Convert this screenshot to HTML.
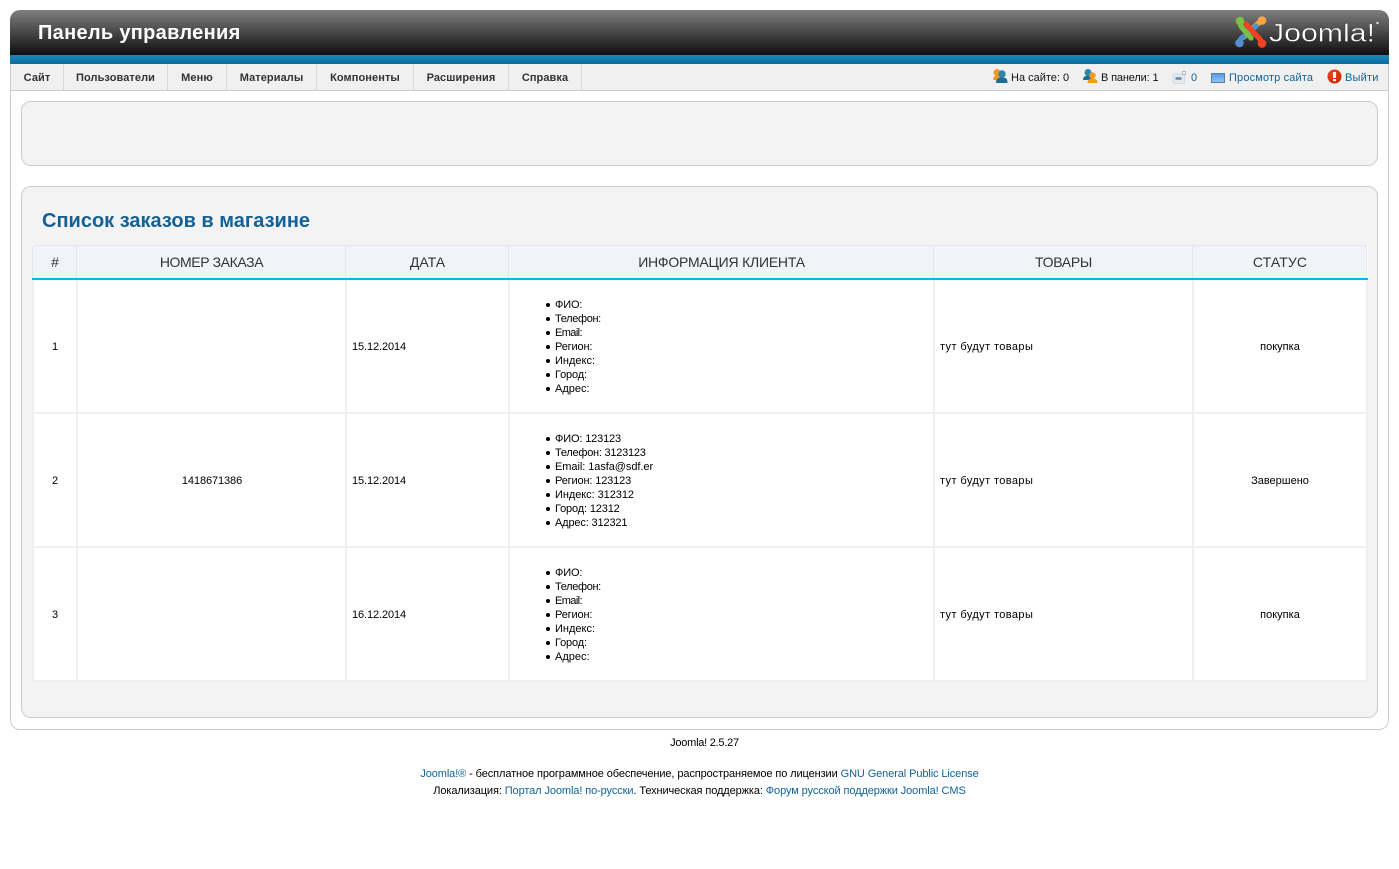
<!DOCTYPE html>
<html lang="ru"><head><meta charset="utf-8"><title>Панель управления</title>
<style>
html,body{margin:0;padding:0;background:#fff;}
body{width:1399px;height:869px;position:relative;overflow:hidden;font:11px/14px "Liberation Sans",Arial,sans-serif;color:#000;}
a{color:#146295;text-decoration:none}
.abs{position:absolute;white-space:nowrap}
#hdr{position:absolute;left:10px;top:10px;width:1379px;height:45px;border-radius:10px 10px 0 0;background:linear-gradient(#7f7f7f,#0e0e0e);}
#blue{position:absolute;left:10px;top:55px;width:1379px;height:9px;background:linear-gradient(#1c88b9,#0a6a9c);}
#title{left:38px;top:21px;font-size:20px;line-height:24px;font-weight:bold;color:#fff;letter-spacing:.3px;}
#wrap{position:absolute;left:10px;top:64px;width:1377px;height:665px;border:1px solid #ccc;border-top:0;border-radius:0 0 10px 10px;background:#fff;}
#menu{position:absolute;left:11px;top:64px;width:1377px;height:26px;background:#f0f0f0;border-bottom:1px solid #ccc;}
.m{position:absolute;top:0;height:26px;border-right:1px solid #d8d8d8;text-align:center;font-weight:bold;line-height:28px;color:#333;letter-spacing:.08px}
.panel{position:absolute;left:21px;width:1355px;background:#f3f3f3;border:1px solid #ccc;border-radius:10px;}
h2{position:absolute;left:42px;top:209px;margin:0;font-size:20px;line-height:24px;font-weight:bold;color:#146295;}
table{position:absolute;left:32px;top:245px;width:1334px;border-collapse:collapse;table-layout:fixed;background:#fff;}
th{height:32px;padding:0;background:#f0f4f9;border-top:1px solid #e4e6e9;border-left:0;border-right:0;border-bottom:2px solid #0ab5ea;font-size:14px;font-weight:normal;color:#333;position:relative}
th::before{content:"";position:absolute;left:-1px;top:0;bottom:0;width:1px;background:#e4e6e9}
th.z::after{content:"";position:absolute;right:0;top:0;bottom:0;width:1px;background:#e4e6e9}
td{height:130px;padding:2px 5px 0;border:2px solid #f0f0f0;font-size:11px;line-height:14px;}
.c{text-align:center}
.d{letter-spacing:-.1px}
.g{letter-spacing:.4px}
td ul{margin:0;padding:0 0 0 40px;list-style:none}
td li{height:14px;position:relative;white-space:nowrap}
td li::before{content:"";position:absolute;left:-9px;top:5px;width:4px;height:4px;border-radius:50%;background:#000}
.tl{letter-spacing:-.35px}.em{letter-spacing:-.6px}.sh{letter-spacing:-.15px}
.tl2{letter-spacing:-.25px}.em2{letter-spacing:-.06px}
.f{position:absolute;left:0;width:1399px;text-align:center;font-size:11px;line-height:14px;letter-spacing:-.1px}
</style></head><body>
<div id="hdr"></div><div id="blue"></div>
<div class="abs" id="title">Панель управления</div>
<svg class="abs" style="left:1234px;top:15px" width="150" height="34" viewBox="0 0 150 34">
<g fill="none" stroke-width="5.200" stroke-linecap="round" stroke-linejoin="round">
<path d="M28 5.500 C24 8 22 10 17 15 L10 22" stroke="#f9a541"/>
<path d="M5.500 28 C6 23 9 22 12 20 L22 11" stroke="#5091cd"/>
<path d="M12 9 L21 19 C24 22 27 24 28 29" stroke="#f44321"/>
<path d="M6 6 C6 11 8 13 11 16 L17 23" stroke="#7ac143"/>
</g>
<circle cx="6" cy="6" r="4.300" fill="#7ac143"/><circle cx="28" cy="5.500" r="4.300" fill="#f9a541"/><circle cx="5.500" cy="28" r="4.300" fill="#5091cd"/><circle cx="28" cy="28.500" r="4.300" fill="#f44321"/>
<text x="35" y="26.500" font-family="Liberation Sans,sans-serif" font-size="25" fill="#fff" stroke="#2a2a2a" stroke-width=".35" textLength="106" lengthAdjust="spacingAndGlyphs">Joomla!</text>
<circle cx="143.500" cy="8" r="1.200" fill="#ddd"/>
</svg>
<div id="wrap"></div>
<div id="menu">
<div class="m" style="left:0;width:52px">Сайт</div>
<div class="m" style="left:53px;width:103px">Пользователи</div>
<div class="m" style="left:157px;width:58px">Меню</div>
<div class="m" style="left:216px;width:89px">Материалы</div>
<div class="m" style="left:306px;width:96px">Компоненты</div>
<div class="m" style="left:403px;width:94px">Расширения</div>
<div class="m" style="left:498px;width:72px">Справка</div>
</div>
<svg class="abs" style="left:992px;top:68px" width="16" height="16" viewBox="0 0 16 16"><circle cx="5" cy="4.500" r="3.500" fill="#f39a1f"/><path d="M1 12c0-3 1.500-4.500 4-4.500s5 1.500 5 4.500z" fill="#f39a1f"/><circle cx="10" cy="6" r="3.700" fill="#2d86ad"/><path d="M4 15c0-4.500 2-5.500 6-5.500s5.500 1 5.500 5.500z" fill="#1c6d92"/></svg>
<div class="abs" style="left:1011px;top:71px;color:#111">На сайте: 0</div>
<svg class="abs" style="left:1082px;top:68px" width="16" height="16" viewBox="0 0 16 16"><circle cx="6" cy="4.500" r="3.500" fill="#2d86ad"/><path d="M1 12c0-3 2-4.500 5-4.500s5 1.500 5 4.500z" fill="#1c6d92"/><circle cx="10.500" cy="7.500" r="3.200" fill="#f39a1f"/><path d="M5.500 15c0-3.500 2-4.500 5-4.500s5 1 5 4.500z" fill="#f39a1f"/></svg>
<div class="abs" style="left:1101px;top:71px;color:#111;letter-spacing:-.15px">В панели: 1</div>
<svg class="abs" style="left:1172px;top:71px" width="15" height="13" viewBox="0 0 15 13"><rect x="1" y="3" width="11.500" height="9.500" rx="1.500" fill="#e6e9ec" stroke="#d5d8da"/><path d="M3.500 7.500h6" stroke="#5d8aa5" stroke-width="2.500"/><rect x="10.500" y=".5" width="3" height="3" fill="#fff" stroke="#7fa6bd" stroke-width=".7"/></svg>
<a class="abs" style="left:1191px;top:71px">0</a>
<svg class="abs" style="left:1211px;top:73px" width="14" height="10" viewBox="0 0 14 10"><defs><linearGradient id="g" x1="0" y1="0" x2="0" y2="1"><stop offset="0" stop-color="#4f9be8"/><stop offset="1" stop-color="#8fc5f5"/></linearGradient></defs><rect x=".5" y=".5" width="13" height="9" fill="url(#g)" stroke="#5f7f9c"/></svg>
<a class="abs" style="left:1229px;top:71px;letter-spacing:.15px">Просмотр сайта</a>
<svg class="abs" style="left:1327px;top:69px" width="15" height="15" viewBox="0 0 15 15"><defs><radialGradient id="r" cx=".4" cy=".3" r=".8"><stop offset="0" stop-color="#f0481c"/><stop offset="1" stop-color="#c22806"/></radialGradient></defs><circle cx="7.500" cy="7.500" r="7" fill="url(#r)"/><rect x="6" y="3" width="3" height="6" fill="#fff"/><rect x="6" y="10" width="3" height="2.200" fill="#fff"/></svg>
<a class="abs" style="left:1345px;top:71px;letter-spacing:.2px">Выйти</a>

<div class="panel" style="top:101px;height:63px"></div>
<div class="panel" style="top:186px;height:530px"></div>
<h2>Список заказов в магазине</h2>
<table>
<colgroup><col style="width:44px"><col style="width:269px"><col style="width:163px"><col style="width:425px"><col style="width:259px"><col style="width:174px"></colgroup>
<tr><th>#</th><th style="letter-spacing:-.4px">НОМЕР ЗАКАЗА</th><th>ДАТА</th><th style="letter-spacing:-.22px">ИНФОРМАЦИЯ КЛИЕНТА</th><th style="letter-spacing:-.3px">ТОВАРЫ</th><th class="z" style="letter-spacing:.1px">СТАТУС</th></tr>
<tr><td class="c">1</td><td class="c"></td><td class="d">15.12.2014</td><td><ul><li class="sh">ФИО:</li><li class="tl">Телефон:</li><li class="em">Email:</li><li class="sh">Регион:</li><li>Индекс:</li><li class="sh">Город:</li><li>Адрес:</li></ul></td><td class="g">тут будут товары</td><td class="c">покупка</td></tr>
<tr><td class="c">2</td><td class="c d" style="padding-left:6px">1418671386</td><td class="d">15.12.2014</td><td><ul><li class="sh">ФИО: 123123</li><li class="tl2">Телефон: 3123123</li><li class="em2">Email: 1asfa@sdf.er</li><li class="sh">Регион: 123123</li><li class="em2">Индекс: 312312</li><li class="sh">Город: 12312</li><li class="sh">Адрес: 312321</li></ul></td><td class="g">тут будут товары</td><td class="c">Завершено</td></tr>
<tr><td class="c">3</td><td class="c"></td><td class="d">16.12.2014</td><td><ul><li class="sh">ФИО:</li><li class="tl">Телефон:</li><li class="em">Email:</li><li class="sh">Регион:</li><li>Индекс:</li><li class="sh">Город:</li><li>Адрес:</li></ul></td><td class="g">тут будут товары</td><td class="c">покупка</td></tr>
</table>
<div class="f" style="top:736px;left:5px;letter-spacing:-.25px">Joomla! 2.5.27</div>
<div class="f" style="top:767px"><a>Joomla!®</a> - бесплатное программное обеспечение, распространяемое по лицензии <a>GNU General Public License</a></div>
<div class="f" style="top:784px"> Локализация: <a>Портал Joomla! по-русски</a>. Техническая поддержка: <a>Форум русской поддержки Joomla! CMS</a></div>
</body></html>
